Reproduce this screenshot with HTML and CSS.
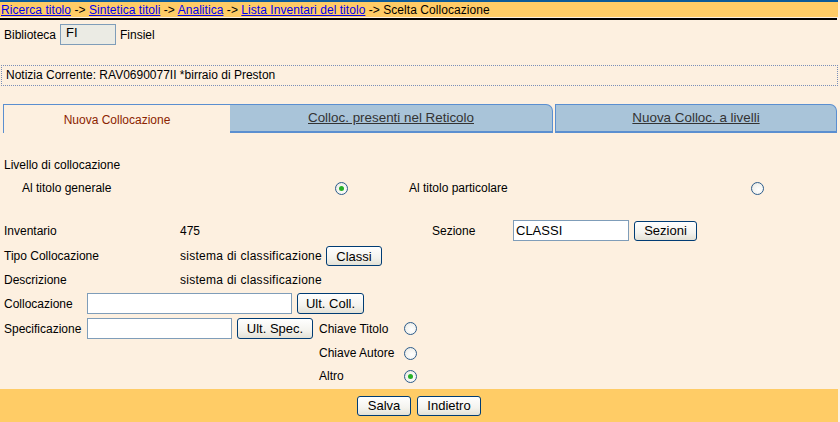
FILE: index.html
```html
<!DOCTYPE html>
<html lang="it">
<head>
<meta charset="utf-8">
<title>Scelta Collocazione</title>
<link rel="stylesheet" href="styles.css">
</head>
<body>
<div class="page">
  <div class="topstrip"></div>
  <div class="crumbs">
    <a href="#">Ricerca titolo</a> -&gt; <a href="#">Sintetica titoli</a> -&gt; <a href="#">Analitica</a> -&gt; <a href="#">Lista Inventari del titolo</a> -&gt; Scelta Collocazione
  </div>
  <div class="rule"></div>

  <div class="bib-row">
    <span>Biblioteca</span>
    <span class="input ro bib-in">FI</span>
    <span>Finsiel</span>
  </div>

  <div class="notizia">Notizia Corrente: RAV0690077II *birraio di Preston</div>

  <div class="tabs">
    <div class="tab active">Nuova Collocazione</div>
    <div class="tab t2"><a href="#">Colloc. presenti nel Reticolo</a></div>
    <div class="tab t3"><a href="#">Nuova Colloc. a livelli</a></div>
  </div>

  <div class="form">
    <div class="row r-livello">Livello di collocazione</div>
    <div class="row r-radio">
      <span class="w-gen">Al titolo generale</span>
      <span class="radio on"></span>
      <span class="w-part">Al titolo particolare</span>
      <span class="radio"></span>
    </div>

    <div class="row r-inv">
      <span class="lab">Inventario</span>
      <span class="w-475">475</span>
      <span class="w-sez">Sezione</span>
      <span class="input w-sezin">CLASSI</span>
      <span class="btn w-sezbtn">Sezioni</span>
    </div>
    <div class="row r-tipo">
      <span class="lab">Tipo Collocazione</span>
      <span class="wide">sistema di classificazione</span>
      <span class="btn w-classi">Classi</span>
    </div>
    <div class="row r-descr">
      <span class="lab">Descrizione</span>
      <span class="wide">sistema di classificazione</span>
    </div>
    <div class="row r-coll">
      <span class="lab2">Collocazione</span>
      <span class="input w-collin"></span>
      <span class="btn w-collbtn">Ult. Coll.</span>
    </div>
    <div class="row r-spec">
      <span class="lab2">Specificazione</span>
      <span class="input w-specin"></span>
      <span class="btn w-specbtn">Ult. Spec.</span>
      <span class="w-key">Chiave Titolo</span>
      <span class="radio"></span>
    </div>
    <div class="row r-aut">
      <span class="w-key">Chiave Autore</span>
      <span class="radio"></span>
    </div>
    <div class="row r-altro">
      <span class="w-key">Altro</span>
      <span class="radio on"></span>
    </div>
  </div>

  <div class="footer">
    <span class="btn w-salva">Salva</span>
    <span class="btn w-indietro">Indietro</span>
  </div>
</div>
</body>
</html>
```

FILE: styles.css
```css
html, body {
  margin: 0;
  padding: 0;
}
body {
  background: #fdf0e0;
  font-family: "Liberation Sans", Arial, sans-serif;
  font-size: 12px;
  color: #000;
}
.page {
  width: 838px;
}
.topstrip {
  height: 2px;
  background: #0b5a98;
}
.crumbs {
  height: 14px;
  padding-top: 1px;
  line-height: 15px;
  background: #ffcc66;
  padding-left: 1px;
  white-space: nowrap;
  letter-spacing: 0.05px;
}
.crumbs a {
  color: #0000ee;
  text-decoration: underline;
}
.rule {
  height: 2px;
  margin-top: 1px;
  width: 837px;
  background: #000;
}
.bib-row {
  display: flex;
  align-items: center;
  gap: 4px;
  height: 21px;
  margin-top: 4px;
  padding-left: 4px;
}
.input {
  box-sizing: border-box;
  display: inline-block;
  height: 21px;
  border: 1px solid #7f9db9;
  background: #fff;
  padding: 1px 2px;
  line-height: 17px;
  font-size: 13px;
}
.ro {
  background: #ebebe4;
}
.bib-in {
  width: 56px;
  padding-left: 5px;
  line-height: 13px;
}
.notizia {
  margin-top: 20px;
  margin-left: 1px;
  height: 19px;
  line-height: 19px;
  border: 1px dotted #7a8fb8;
  padding-left: 4px;
  width: 831px;
}
.tabs {
  display: flex;
  margin-top: 18px;
  padding-left: 3px;
  height: 29px;
}
.tab {
  box-sizing: border-box;
  height: 29px;
  line-height: 29px;
  text-align: center;
  font-size: 12px;
}
.tab a {
  color: #333;
  text-decoration: underline;
  font-size: 13.4px;
}
.tab.active {
  width: 227px;
  color: #8b2300;
  border-left: 1px solid #5b8fd0;
  border-top: 1px solid #5b8fd0;
  line-height: 27px;
  padding-top: 2px;
}
.t2, .t3 {
  background: #a9c4d9;
  border-top: 1px solid #5b8fd0;
  border-right: 1px solid #5b8fd0;
  border-bottom: 2px solid #5b8fd0;
  border-top-right-radius: 7px;
  line-height: 26px;
}
.t2 {
  width: 323px;
}
.t3 {
  width: 282px;
  margin-left: 2px;
  border-left: 1px solid #5b8fd0;
}
.form {
  padding-left: 4px;
}
.row {
  display: flex;
  align-items: center;
  white-space: nowrap;
}
.wide {
  letter-spacing: 0.28px;
}
.r-livello {
  height: 18px;
  margin-top: 23px;
}
.r-radio {
  height: 18px;
  margin-top: 5px;
  padding-left: 18px;
}
.w-gen { width: 313px; }
.w-part { width: 342px; margin-left: 61px; }
.radio {
  box-sizing: border-box;
  width: 13px;
  height: 13px;
  border-radius: 50%;
  border: 1px solid #2c5c8c;
  background: radial-gradient(circle at 60% 60%, #ffffff 0%, #f2f2ee 60%, #d8d8d0 100%);
  position: relative;
  flex: none;
}
.radio.on::after {
  content: "";
  position: absolute;
  left: 3px;
  top: 3px;
  width: 5px;
  height: 5px;
  border-radius: 50%;
  background: #27b027;
}
.r-inv {
  height: 21px;
  margin-top: 23px;
}
.lab { width: 176px; }
.w-475 { width: 252px; }
.w-sez { width: 81px; }
.w-sezin { width: 116px; }
.btn {
  box-sizing: border-box;
  display: inline-flex;
  align-items: center;
  justify-content: center;
  height: 20px;
  border: 1px solid #003c74;
  border-radius: 3px;
  background: linear-gradient(#ffffff, #f4f3ee 60%, #e3e1d6);
  font-size: 13px;
  color: #000;
  flex: none;
}
.w-sezbtn { width: 63px; margin-left: 5px; }
.r-tipo {
  height: 20px;
  margin-top: 5px;
}
.w-classi { width: 56px; margin-left: 4px; }
.r-descr {
  height: 20px;
  margin-top: 4px;
}
.r-coll {
  height: 21px;
  margin-top: 3px;
}
.lab2 { width: 83px; }
.w-collin { width: 205px; }
.w-collbtn { width: 67px; margin-left: 5px; height: 21px; }
.r-spec {
  height: 21px;
  margin-top: 4px;
}
.w-specin { width: 145px; }
.w-specbtn { width: 76px; margin-left: 5px; height: 21px; }
.w-key { width: 85px; }
.r-spec .w-key { margin-left: 6px; }
.r-aut {
  height: 18px;
  margin-top: 5px;
  padding-left: 315px;
}
.r-altro {
  height: 18px;
  margin-top: 5px;
  padding-left: 315px;
}
.footer {
  display: flex;
  justify-content: flex-start;
  align-items: center;
  gap: 6px;
  height: 33px;
  margin-top: 4px;
  background: #ffcc66;
  padding-left: 357px;
  box-sizing: border-box;
}
.w-salva { width: 54px; height: 20px; }
.w-indietro { width: 64px; height: 20px; }
```
